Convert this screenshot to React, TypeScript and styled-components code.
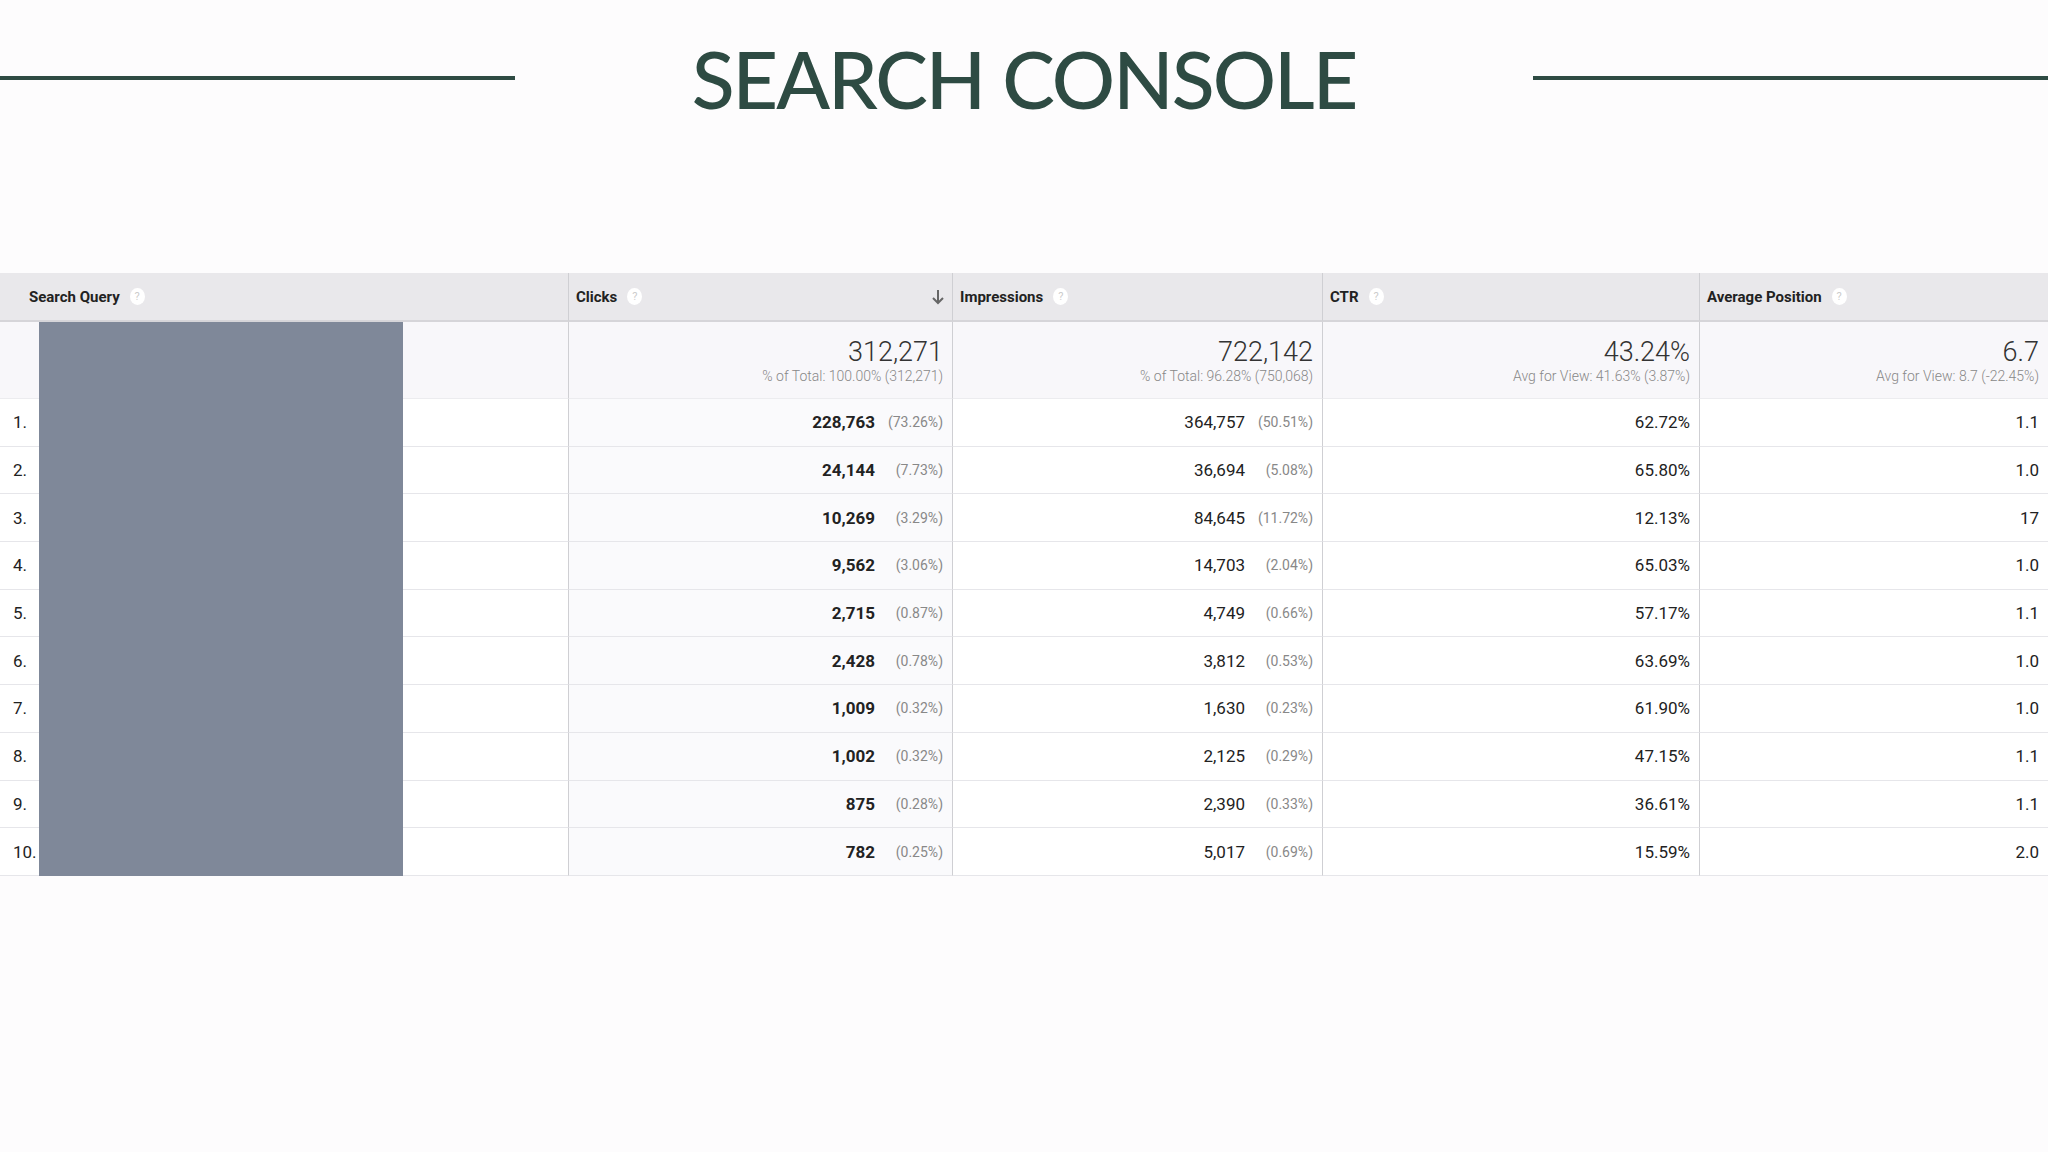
import React from 'react';
import styled, { createGlobalStyle } from 'styled-components';

const GlobalStyle = createGlobalStyle`
  html, body { margin: 0; padding: 0; background: #fdfcfd; }
  body { font-family: Roboto, "Liberation Sans", sans-serif; }
`;

const Page = styled.div`
  width: 2048px;
  height: 1152px;
  background: #fdfcfd;
  overflow: hidden;
`;

const TitleBar = styled.div`
  display: grid;
  grid-template-columns: 515px 1fr 515px;
  align-items: center;
  height: 156px;
`;

const Rule = styled.div`
  height: 4px;
  background: #2e4b43;
`;

const Title = styled.h1`
  margin: 0;
  text-align: center;
  font-family: Lato, "Open Sans", sans-serif;
  font-weight: 500;
  font-size: 79px;
  letter-spacing: -2px;
  color: #2e4b43;
`;

const TableWrap = styled.div`
  position: relative;
  margin-top: 117px;
`;

const Grid = styled.div`
  display: grid;
  grid-template-columns: 568px 384px 370px 377px 1fr;
`;

const Head = styled.div<{ $first?: boolean }>`
  height: 47px;
  background: #e9e8eb;
  border-bottom: 2px solid #d6d5d9;
  border-left: ${p => (p.$first ? 'none' : '1px solid #cfcfd3')};
  display: flex;
  align-items: center;
  padding: 0 ${p => (p.$first ? '29px' : '7px')};
  font-size: 15px;
  font-weight: 700;
  color: #222;
  gap: 10px;
`;

const Help = styled.span`
  width: 15px;
  height: 17px;
  border-radius: 50%;
  background: #fff;
  color: #ccc;
  font-size: 11px;
  font-weight: 400;
  display: inline-flex;
  align-items: center;
  justify-content: center;
`;

const SortArrow = styled.svg`
  margin-left: auto;
`;

const Summary = styled.div<{ $first?: boolean }>`
  height: 76px;
  background: #f8f7fa;
  border-bottom: 1px solid #ececef;
  border-left: ${p => (p.$first ? 'none' : '1px solid #cfcfd3')};
  display: flex;
  flex-direction: column;
  align-items: flex-end;
  justify-content: center;
  padding: 0 9px;
  color: #333;
`;

const Big = styled.div`
  font-size: 27px;
  font-weight: 300;
  line-height: 32px;
`;

const Small = styled.div`
  font-size: 14px;
  color: #888;
  font-weight: 300;
`;

const Cell = styled.div<{ $first?: boolean; $sorted?: boolean }>`
  height: 46.7px;
  border-bottom: 1px solid #e6e6ea;
  border-left: ${p => (p.$first ? 'none' : '1px solid #cfcfd3')};
  background: ${p => (p.$sorted ? '#fafafc' : '#fff')};
  display: flex;
  align-items: center;
  justify-content: ${p => (p.$first ? 'flex-start' : 'flex-end')};
  padding: ${p => (p.$first ? '0 0 0 13px' : '0 9px')};
  font-size: 17px;
  color: #222;
  gap: 8px;
`;

const Value = styled.span<{ $bold?: boolean }>`
  font-weight: ${p => (p.$bold ? 700 : 400)};
`;

const Pct = styled.span`
  font-size: 14px;
  color: #888;
  width: 60px;
  text-align: right;
`;

const Redact = styled.div`
  position: absolute;
  left: 39px;
  top: 49px;
  width: 364px;
  bottom: 0;
  background: #7f8899;
`;

const rows = [
  ['228,763', '73.26%', '364,757', '50.51%', '62.72%', '1.1'],
  ['24,144', '7.73%', '36,694', '5.08%', '65.80%', '1.0'],
  ['10,269', '3.29%', '84,645', '11.72%', '12.13%', '17'],
  ['9,562', '3.06%', '14,703', '2.04%', '65.03%', '1.0'],
  ['2,715', '0.87%', '4,749', '0.66%', '57.17%', '1.1'],
  ['2,428', '0.78%', '3,812', '0.53%', '63.69%', '1.0'],
  ['1,009', '0.32%', '1,630', '0.23%', '61.90%', '1.0'],
  ['1,002', '0.32%', '2,125', '0.29%', '47.15%', '1.1'],
  ['875', '0.28%', '2,390', '0.33%', '36.61%', '1.1'],
  ['782', '0.25%', '5,017', '0.69%', '15.59%', '2.0'],
];

export default function App() {
  return (
    <Page>
      <GlobalStyle />
      <TitleBar>
        <Rule />
        <Title>SEARCH CONSOLE</Title>
        <Rule />
      </TitleBar>
      <TableWrap>
        <Grid>
          <Head $first>Search Query <Help>?</Help></Head>
          <Head>
            Clicks <Help>?</Help>
            <SortArrow width="14" height="18" viewBox="0 0 14 18">
              <path d="M7 2v13M2 10l5 5 5-5" stroke="#666" strokeWidth="2" fill="none" />
            </SortArrow>
          </Head>
          <Head>Impressions <Help>?</Help></Head>
          <Head>CTR <Help>?</Help></Head>
          <Head>Average Position <Help>?</Help></Head>

          <Summary $first />
          <Summary><Big>312,271</Big><Small>% of Total: 100.00% (312,271)</Small></Summary>
          <Summary><Big>722,142</Big><Small>% of Total: 96.28% (750,068)</Small></Summary>
          <Summary><Big>43.24%</Big><Small>Avg for View: 41.63% (3.87%)</Small></Summary>
          <Summary><Big>6.7</Big><Small>Avg for View: 8.7 (-22.45%)</Small></Summary>

          {rows.map((r, i) => (
            <React.Fragment key={i}>
              <Cell $first>{i + 1}.</Cell>
              <Cell $sorted><Value $bold>{r[0]}</Value><Pct>({r[1]})</Pct></Cell>
              <Cell><Value>{r[2]}</Value><Pct>({r[3]})</Pct></Cell>
              <Cell><Value>{r[4]}</Value></Cell>
              <Cell><Value>{r[5]}</Value></Cell>
            </React.Fragment>
          ))}
        </Grid>
        <Redact />
      </TableWrap>
    </Page>
  );
}
